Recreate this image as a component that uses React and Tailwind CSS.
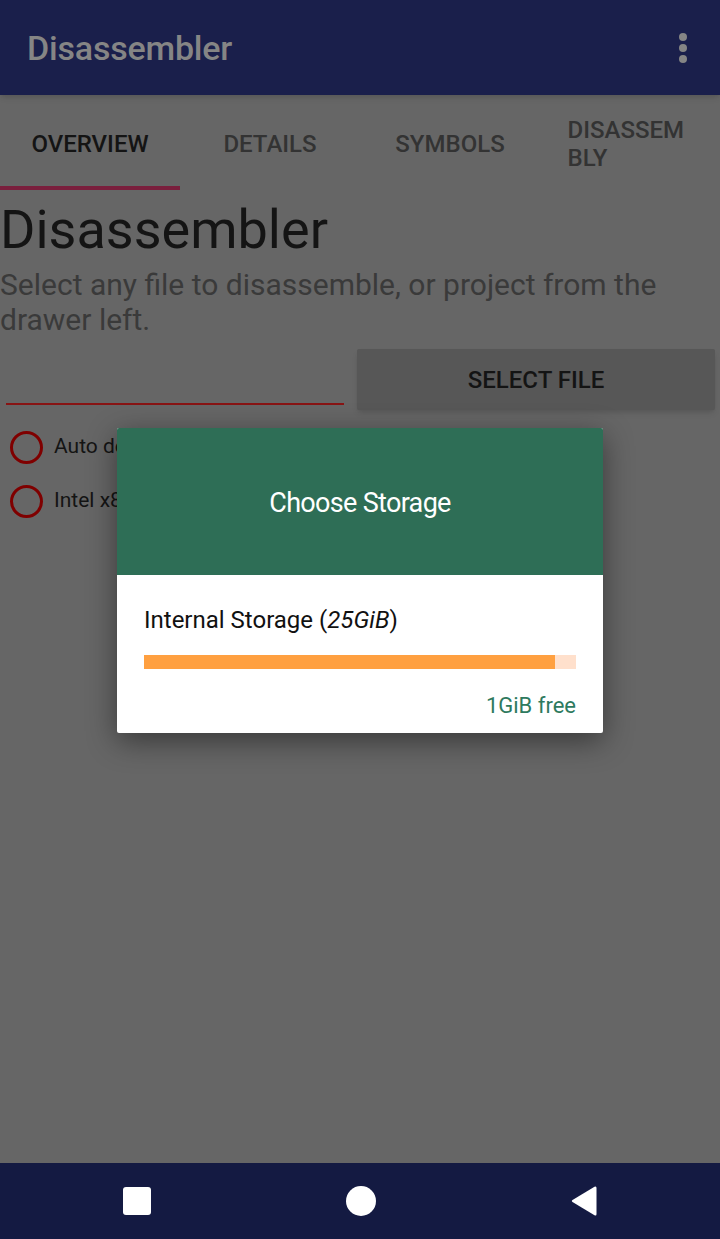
import React from 'react';

const TABS = ['OVERVIEW', 'DETAILS', 'SYMBOLS', 'DISASSEMBLY'];

const Radio = ({ label }) => (
  <div className="flex items-center h-[54px]">
    <div className="ml-[10px] w-[33px] h-[33px] rounded-full border-[3px] border-[#7f0000]" />
    <span className="ml-[11px] text-[21px] text-[#141414]">{label}</span>
  </div>
);

const App = () => {
  return (
    <div
      className="relative w-[720px] h-[1239px] flex flex-col bg-[#666666] overflow-hidden"
      style={{ fontFamily: 'Roboto, "Noto Sans", sans-serif' }}
    >
      {/* app bar */}
      <div className="h-[95px] bg-[#1a1f4b] flex items-center justify-between pl-[27px] pr-[33px] shadow-md z-10">
        <span className="text-[34px] leading-[40px] font-medium text-[#858585] tracking-[-0.2px]">Disassembler</span>
        <div className="flex flex-col gap-[3px]">
          <span className="w-[8px] h-[8px] rounded-full bg-[#858585]" />
          <span className="w-[8px] h-[8px] rounded-full bg-[#858585]" />
          <span className="w-[8px] h-[8px] rounded-full bg-[#858585]" />
        </div>
      </div>

      {/* tabs */}
      <div className="grid grid-cols-4 h-[95px]">
        {TABS.map((t, i) => (
          <div key={t} className="relative flex items-center justify-center">
            {t === 'DISASSEMBLY' ? (
              <span className="text-[24px] font-medium text-[#333333] leading-[28px] w-[125px] break-all mt-[2px]">
                DISASSEMBLY
              </span>
            ) : (
              <span className={`text-[24px] leading-[28px] font-medium mt-[2px] ${i === 0 ? 'text-[#141414]' : 'text-[#333333]'}`}>
                {t}
              </span>
            )}
            {i === 0 && <div className="absolute left-0 right-0 bottom-0 h-[4px] bg-[#7a1f3d]" />}
          </div>
        ))}
      </div>

      {/* overview content */}
      <div className="flex-1 flex flex-col">
        <h1 className="text-[54px] leading-[64px] text-[#141414] mt-[8px]">Disassembler</h1>
        <p className="mt-[5px] text-[30px] leading-[35px] text-[#3a3a3a]">
          Select any file to disassemble, or project from the drawer left.
        </p>
        <div className="flex items-start mt-[12px]">
          <div className="w-[338px] ml-[6px] h-[56px] border-b-2 border-[#881414]" />
          <button className="ml-[13px] w-[358px] h-[61px] bg-[#575757] shadow-md rounded-[2px] text-[24px] font-medium text-[#141414]">
            SELECT FILE
          </button>
        </div>
        <div className="mt-[10px] flex flex-col">
          <Radio label="Auto detect" />
          <Radio label="Intel x86" />
        </div>
      </div>

      {/* bottom nav */}
      <div className="h-[76px] bg-[#141a42] flex items-center justify-center gap-[195px]">
        <div className="w-[28px] h-[28px] bg-white rounded-[3px]" />
        <div className="w-[30px] h-[30px] bg-white rounded-full" />
        <svg width="26" height="30" viewBox="0 0 26 30">
          <path d="M23.5 0.8 L1.5 14 Q0.2 15 1.5 16 L23.5 29.2 Q25.5 30.2 25.5 28 L25.5 2 Q25.5 -0.2 23.5 0.8 Z" fill="#ffffff" />
        </svg>
      </div>

      {/* dialog */}
      <div className="absolute left-[117px] top-[428px] w-[486px] bg-white rounded-[2px] shadow-[0_8px_30px_rgba(0,0,0,0.45)] overflow-hidden">
        <div className="h-[147px] bg-[#2e6e56] flex items-center justify-center">
          <span className="text-[27px] text-white tracking-tight mt-[4px]">Choose Storage</span>
        </div>
        <div className="px-[27px] pt-[31px] pb-[14px]">
          <div className="text-[24px] leading-[28px] text-[#111111]">
            Internal Storage (<i>25GiB</i>)
          </div>
          <div className="mt-[21px] h-[14px] bg-[#ffe0cc] flex">
            <div className="h-full bg-[#ffa040]" style={{ width: `${(411 / 432) * 100}%` }} />
          </div>
          <div className="mt-[24px] text-right text-[22px] leading-[26px] text-[#2e7a5e]">1GiB free</div>
        </div>
      </div>
    </div>
  );
};

export default App;
